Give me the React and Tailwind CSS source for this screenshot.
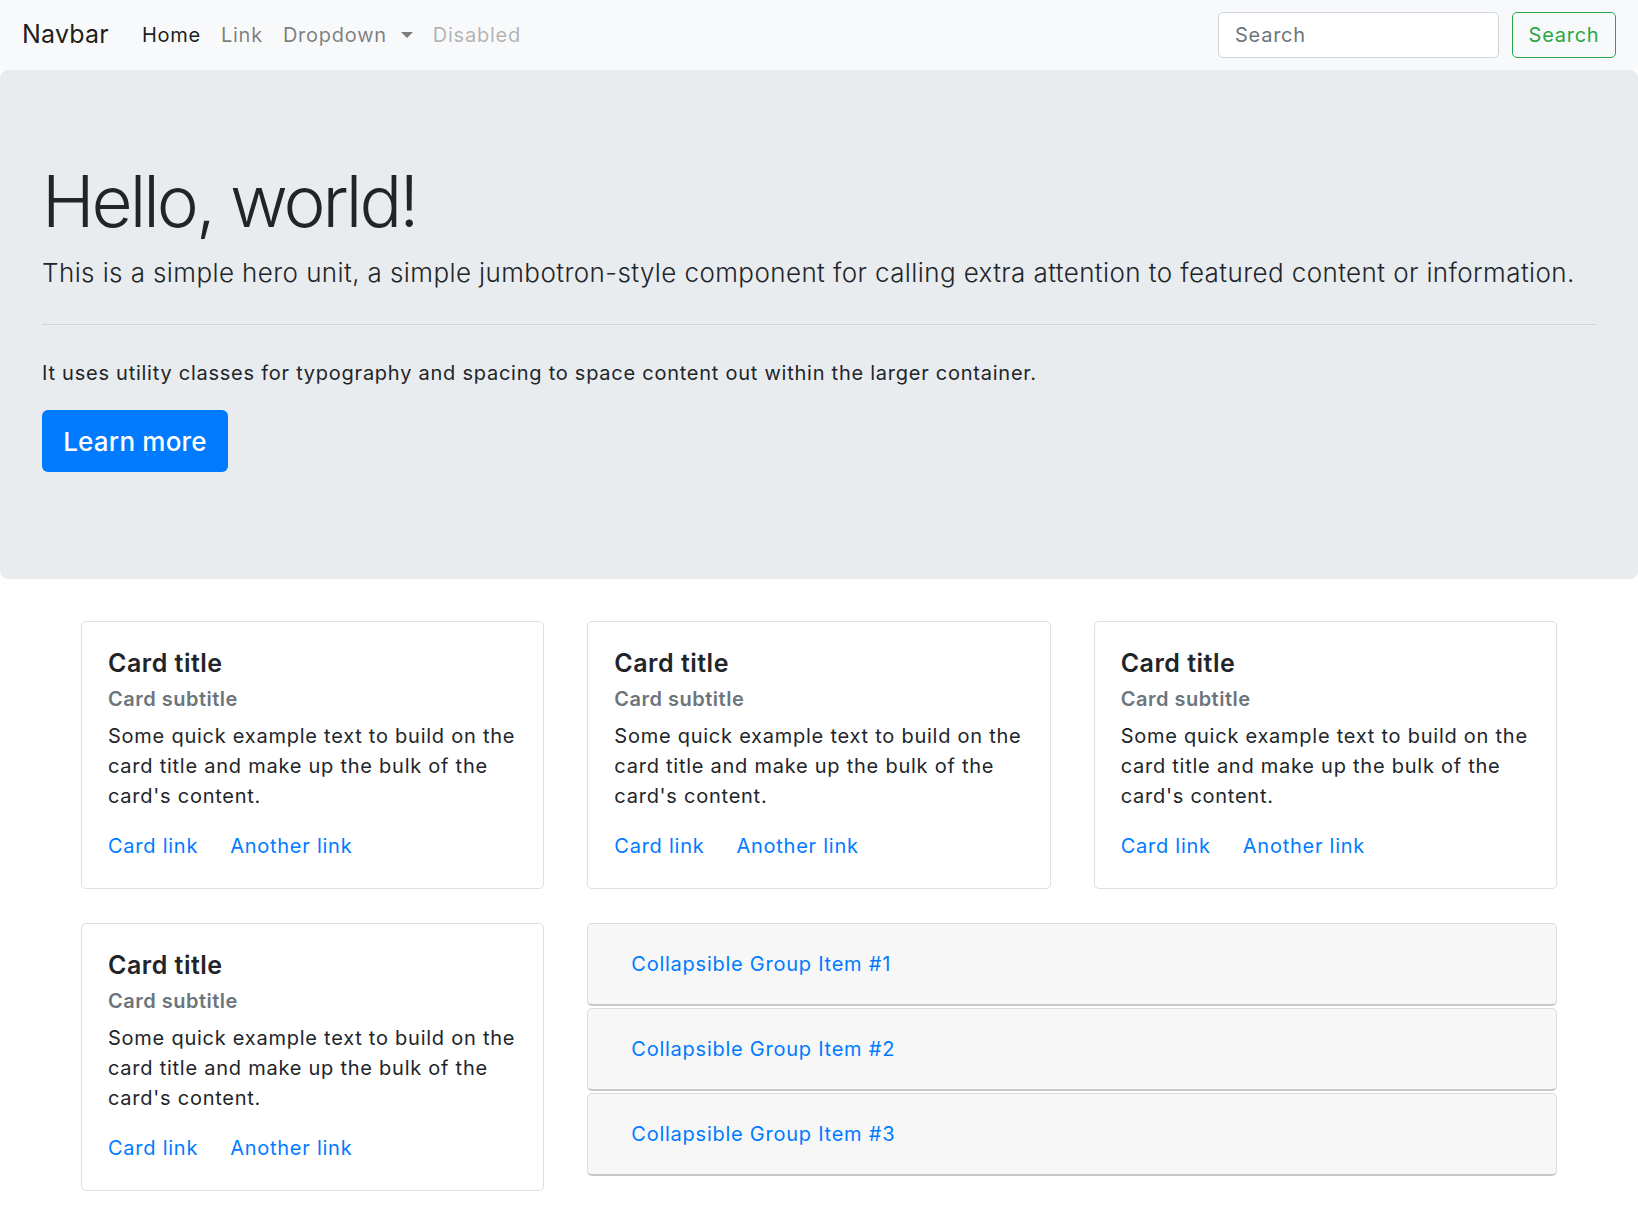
import React from 'react';

const cards = [1, 2, 3];
const groups = ['Collapsible Group Item #1', 'Collapsible Group Item #2', 'Collapsible Group Item #3'];

const Card = () => (
  <div className="border border-[#dfdfdf] rounded-[5px] bg-white px-[26px] pt-[26px] pb-[27px]">
    <h5 className="text-[25px] leading-[30px] font-semibold tracking-[0.5px] text-[#212529]">Card title</h5>
    <h6 className="mt-[9px] text-[20px] leading-[24px] font-semibold tracking-[0.5px] text-[#6c757d]">Card subtitle</h6>
    <p className="mt-[10px] text-[20px] leading-[30px] text-[#212529]">
      Some quick example text to build on the card title and make up the bulk of the card's content.
    </p>
    <div className="mt-[20px] flex gap-[32px] text-[20px] leading-[30px] text-[#007bff]">
      <a href="#">Card link</a>
      <a href="#">Another link</a>
    </div>
  </div>
);

export default function App() {
  return (
    <div className="min-h-screen bg-white font-['Inter','Noto_Sans',sans-serif] tracking-[0.75px] text-[#212529]">
      {/* Navbar */}
      <nav className="h-[70px] bg-[#f8f9fa] flex items-center pl-[22px] pr-[22px]">
        <a href="#" className="text-[25px] tracking-[0.2px] text-black/90 mr-[23px]">Navbar</a>
        <ul className="flex items-center text-[20px]">
          <li><a href="#" className="block px-[10px] text-black/90">Home</a></li>
          <li><a href="#" className="block px-[10px] text-black/50">Link</a></li>
          <li>
            <a href="#" className="flex items-center px-[10px] text-black/50">
              Dropdown
              <span className="ml-[14px] w-0 h-0 border-l-[6.5px] border-r-[6.5px] border-t-[6.5px] border-l-transparent border-r-transparent border-t-black/50"></span>
            </a>
          </li>
          <li><a href="#" className="block px-[10px] text-black/30">Disabled</a></li>
        </ul>
        <div className="ml-auto flex items-center gap-[13px]">
          <input
            type="text"
            placeholder="Search"
            className="w-[281px] h-[46px] px-[16px] text-[20px] tracking-[0.75px] bg-white border border-[#ced4da] rounded-[5px] placeholder:text-[#6c757d] outline-none"
          />
          <button className="w-[104px] h-[46px] text-[20px] tracking-[0.75px] text-[#28a745] border border-[#28a745] rounded-[5px]">
            Search
          </button>
        </div>
      </nav>

      {/* Jumbotron */}
      <div className="bg-[#e9ecef] rounded-[8px] px-[42px] pt-[86px] pb-[107px]">
        <h1 className="text-[71px] leading-[91px] font-light tracking-[-3px] text-[#212529]">Hello, world!</h1>
        <p className="mt-[6px] text-[26px] leading-[39px] font-light tracking-[0.4px]">
          This is a simple hero unit, a simple jumbotron-style component for calling extra attention to featured content or information.
        </p>
        <hr className="mt-[32px] border-0 border-t border-black/10" />
        <p className="mt-[33px] text-[20px] leading-[30px]">
          It uses utility classes for typography and spacing to space content out within the larger container.
        </p>
        <a
          href="#"
          className="mt-[22px] inline-flex items-center justify-center w-[186px] h-[62px] bg-[#007bff] rounded-[6px] text-white text-[26px] font-medium tracking-[0.2px]"
        >
          Learn more
        </a>
      </div>

      {/* Cards */}
      <div className="w-[1476px] mx-auto mt-[42px] grid grid-cols-3 gap-x-[43px] gap-y-[34px] pb-[26px]">
        {cards.map((c) => (
          <Card key={c} />
        ))}
        <Card />
        <div className="col-span-2 flex flex-col gap-[2px]">
          {groups.map((g) => (
            <div
              key={g}
              className="h-[83px] flex items-center pl-[43px] bg-[#f7f7f7] border border-[#dcdcdc] border-b-2 border-b-[#c8c8c8] rounded-[5px]"
            >
              <button className="text-[20px] tracking-[0.75px] text-[#007bff]">{g}</button>
            </div>
          ))}
        </div>
      </div>
    </div>
  );
}
